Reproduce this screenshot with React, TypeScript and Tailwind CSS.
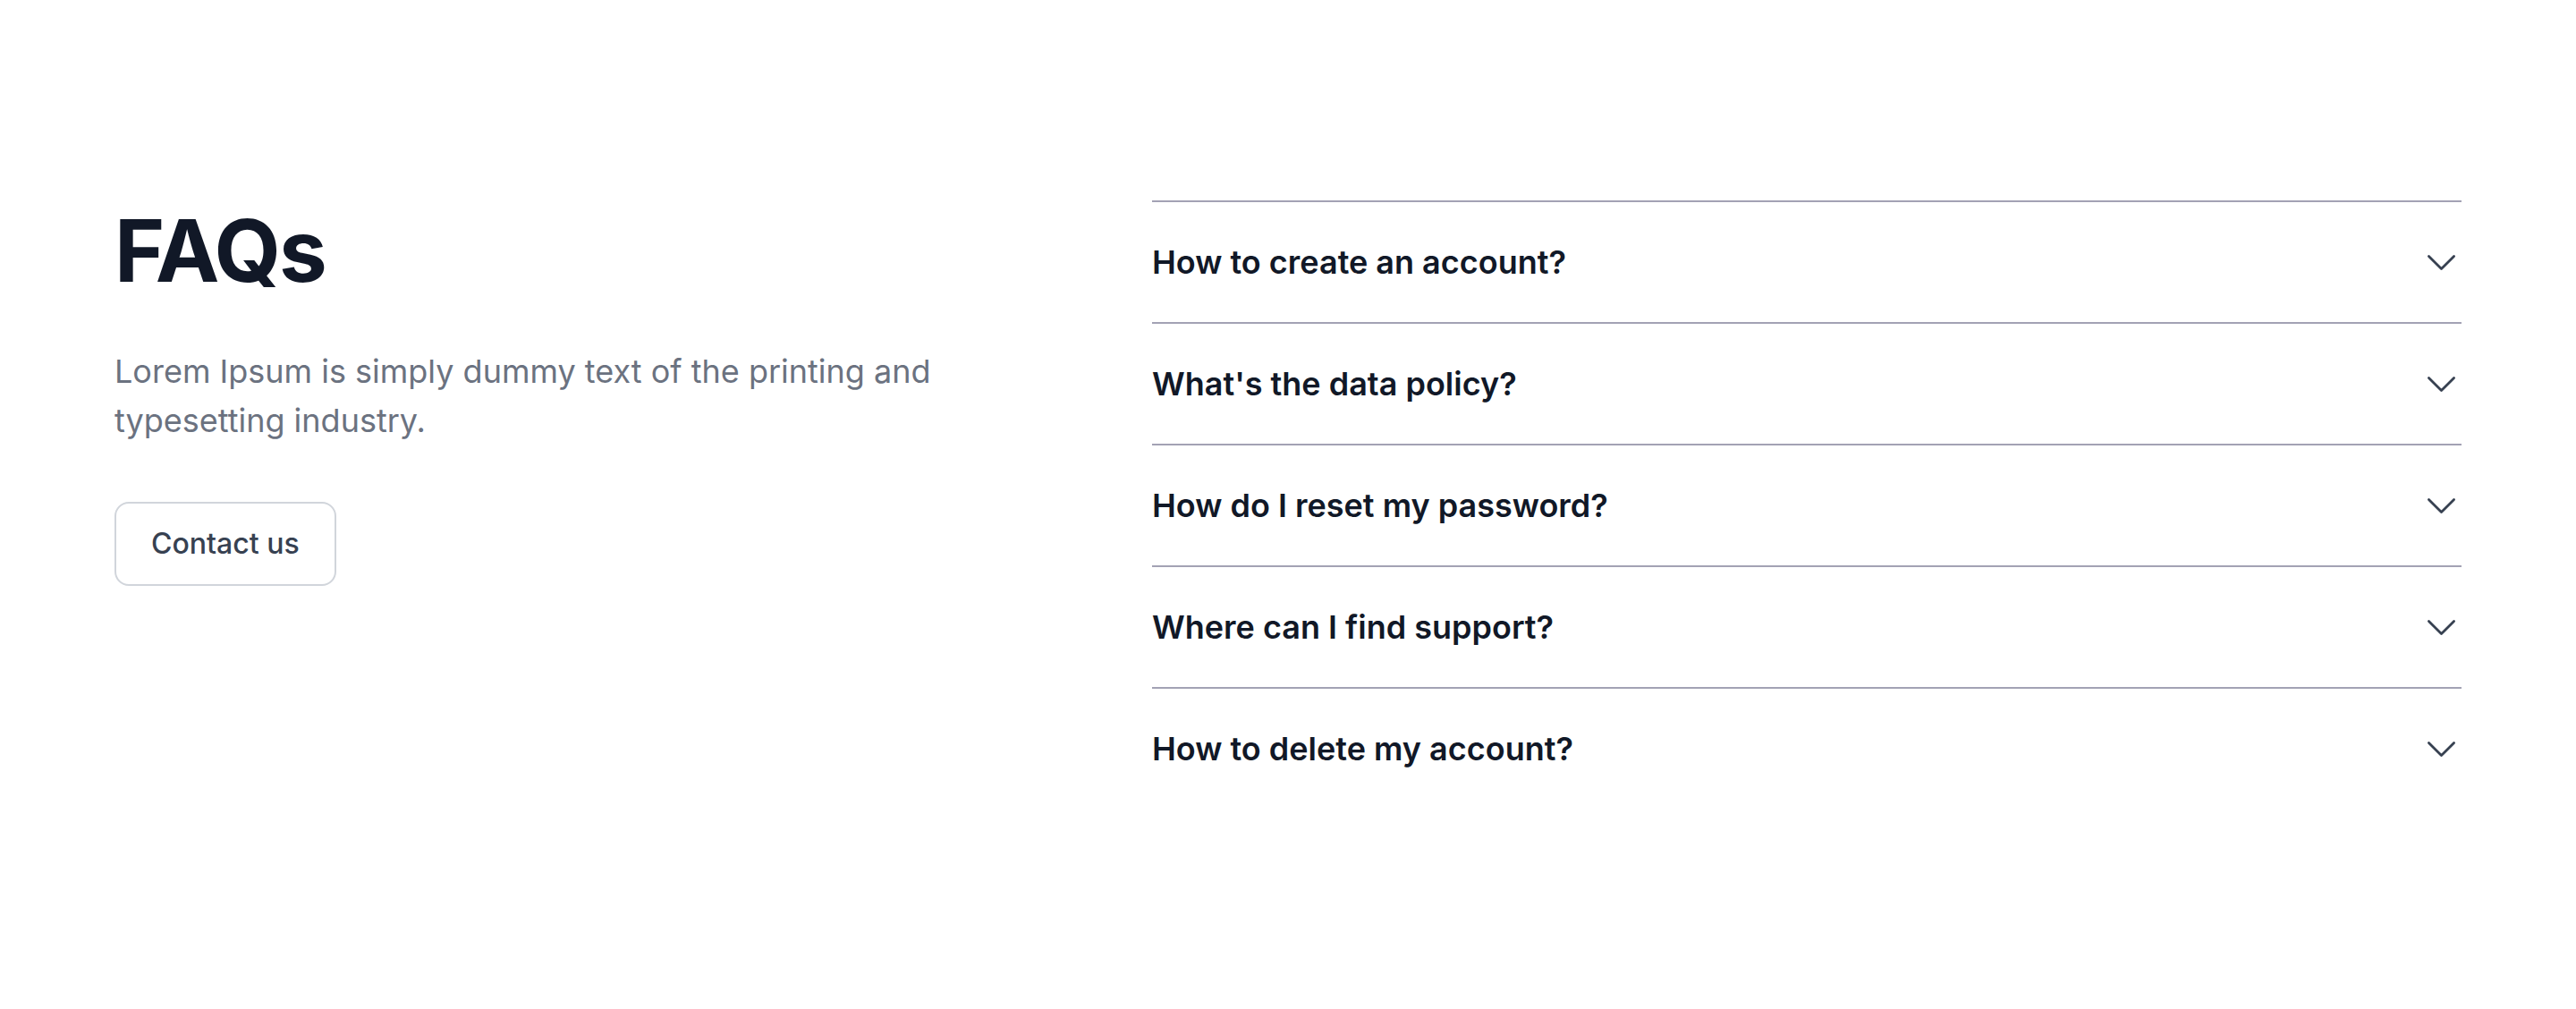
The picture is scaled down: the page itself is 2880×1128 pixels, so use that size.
import { useState } from "react";

const faqs = [
  { q: "How to create an account?", a: "Click the sign up button in the top right corner and follow the steps." },
  { q: "What's the data policy?", a: "We only keep the data we need to run the service." },
  { q: "How do I reset my password?", a: "Use the forgot password link on the login page." },
  { q: "Where can I find support?", a: "Our support team is available through the contact page." },
  { q: "How to delete my account?", a: "Go to settings and choose delete account." },
];

const ChevronDown = ({ open }: { open: boolean }) => (
  <svg
    viewBox="0 0 24 24"
    fill="none"
    stroke="currentColor"
    strokeWidth={1.5}
    className={`w-[45px] h-[45px] text-[#374151] shrink-0 transition-transform ${open ? "rotate-180" : ""}`}
  >
    <path strokeLinecap="round" strokeLinejoin="round" d="m19.5 8.25-7.5 7.5-7.5-7.5" />
  </svg>
);

export default function App() {
  const [openIndex, setOpenIndex] = useState<number | null>(null);

  return (
    <div className="min-h-[1128px] bg-white font-['Inter',_'Noto_Sans',_sans-serif]">
      <section className="flex items-start gap-[100px] px-[128px] pt-[224px] pb-[160px]">
        {/* Left intro */}
        <div className="w-[1060px] shrink-0 pt-[8px]">
          <h1 className="text-[96px] leading-none font-bold tracking-[-0.02em] text-[#111827]">FAQs</h1>
          <p className="mt-[60px] max-w-[1000px] text-[36px] leading-[55px] text-[#6b7280]">
            Lorem Ipsum is simply dummy text of the printing and typesetting industry.
          </p>
          <button className="mt-[63px] h-[94px] px-[39px] flex items-center rounded-[16px] border-2 border-[#d1d5db] bg-white text-[32px] font-medium text-[#374151]">
            Contact us
          </button>
        </div>

        {/* Accordion */}
        <div className="flex-1">
          {faqs.map((item, i) => (
            <div key={item.q} className="border-t-2 border-[#a3a2b4]">
              <button
                onClick={() => setOpenIndex(openIndex === i ? null : i)}
                className="w-full h-[134px] flex items-center justify-between text-left"
              >
                <span className="text-[36px] font-semibold text-[#111827]">{item.q}</span>
                <ChevronDown open={openIndex === i} />
              </button>
              {openIndex === i && (
                <p className="pb-[40px] text-[30px] leading-[48px] text-[#6b7280]">{item.a}</p>
              )}
            </div>
          ))}
        </div>
      </section>
    </div>
  );
}
